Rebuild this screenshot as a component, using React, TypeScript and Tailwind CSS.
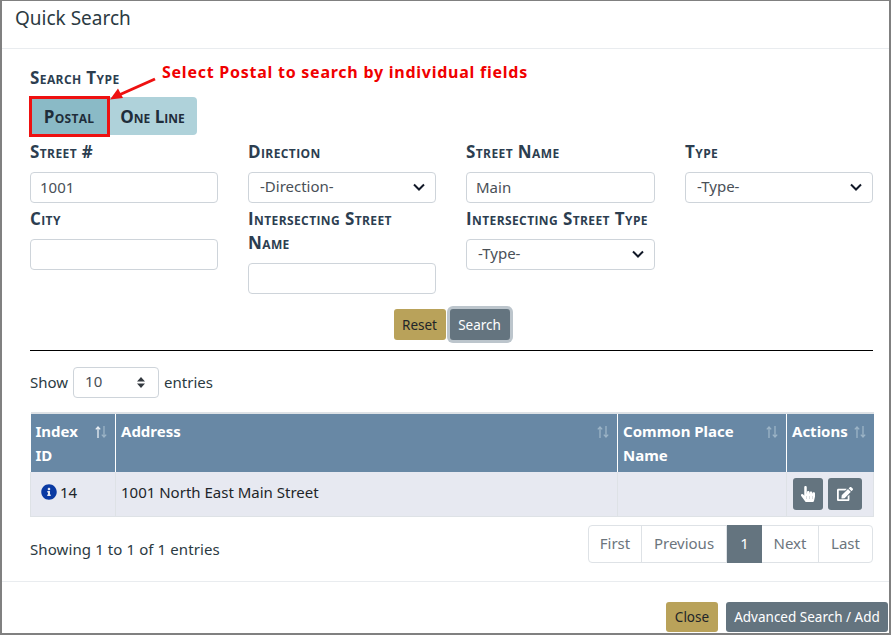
import type { ReactNode } from "react";
import { FaEdit, FaHandPointer, FaInfoCircle } from "react-icons/fa";

const labelClass =
  "block text-[17px] leading-[24px] font-bold text-[#2c3e50] [font-variant:small-caps] font-['Open_Sans','Noto_Sans',sans-serif] tracking-[0.4px]";
const inputClass =
  "block w-full h-[31px] rounded-[4px] border border-[#ced4da] bg-white pb-[2px] text-[15px] text-[#495057] outline-none";

function Field({ label, value }: { label: ReactNode; value?: string }) {
  return (
    <div>
      <label className={labelClass}>{label}</label>
      <input className={`${inputClass} mt-[8px] px-[9px]`} defaultValue={value} />
    </div>
  );
}

function SelectField({ label, value }: { label: string; value: string }) {
  return (
    <div>
      <label className={labelClass}>{label}</label>
      <div className="relative mt-[8px]">
        <select className={`${inputClass} appearance-none px-[11px]`} defaultValue={value}>
          <option>{value}</option>
        </select>
        <svg
          className="absolute right-[11px] top-[11px]"
          width="12"
          height="9"
          viewBox="0 0 12 9"
          fill="none"
          stroke="#111827"
          strokeWidth="2"
        >
          <path d="M1 1.5l5 5 5-5" />
        </svg>
      </div>
    </div>
  );
}

function SortIcon({ active }: { active?: boolean }) {
  return (
    <svg
      className="absolute right-[8px] top-[12px]"
      width="12"
      height="12"
      viewBox="0 0 12 12"
      fill="none"
      strokeWidth="1.3"
    >
      <path d="M3 12V1M.8 3.4L3 1l2.2 2.4" stroke={active ? "#e8eef3" : "#9cb4c6"} />
      <path d="M9 0v11M6.8 8.6L9 11l2.2-2.4" stroke="#9cb4c6" />
    </svg>
  );
}

function SortHeader({ label, active }: { label: string; active?: boolean }) {
  return (
    <th className="relative h-[59px] align-top border-r border-white last:border-r-0 pl-[5px] pr-[6px] pt-[5px] text-left text-[15px] leading-[24px] font-bold text-white">
      <div className="pr-[20px]">{label}</div>
      <SortIcon active={active} />
    </th>
  );
}

const pages = [
  { label: "First", className: "w-[53px] border-r border-[#dee2e6]" },
  { label: "Previous", className: "w-[85px] border-r border-[#dee2e6]" },
  { label: "1", className: "-my-px w-[35px] bg-[#64747f] text-white" },
  { label: "Next", className: "w-[57px] border-r border-[#dee2e6]" },
  { label: "Last", className: "w-[53px]" },
];

export default function App() {
  return (
    <div className="relative flex h-[635px] w-[891px] flex-col overflow-hidden border-2 border-t-[1px] border-[#808080] bg-white font-['Noto_Sans',sans-serif] text-[15px] text-[#212529]">
      <div className="h-[48px] shrink-0 border-b border-[#e9ecef] px-[13px] pt-[3px] text-[19px] leading-[28px] text-[#2b3a42]">
        Quick Search
      </div>

      <div className="flex-1 pl-[28px] pr-[16px]">
        <label className={`${labelClass} mt-[17px]`}>Search Type</label>
        <div className="mt-[7px] flex h-[38px] w-[167px] overflow-hidden rounded-[4px] bg-[#afd2da]">
          <button className="w-[78px] bg-[#8abac6] pt-[1px] text-[17px] font-bold tracking-[0.3px] text-[#1f2d3a] [font-variant:small-caps] font-['Open_Sans',sans-serif]">
            Postal
          </button>
          <button className="flex-1 pt-[1px] text-[17px] font-bold text-[#1f2d3a] [font-variant:small-caps] font-['Open_Sans',sans-serif]">
            One Line
          </button>
        </div>

        <div className="mt-[5px] grid grid-cols-[188px_188px_189px_188px] gap-x-[30px] gap-y-[4px]">
          <Field label="Street #" value="1001" />
          <SelectField label="Direction" value="-Direction-" />
          <Field label="Street Name" value="Main" />
          <SelectField label="Type" value="-Type-" />
          <Field label="City" />
          <Field
            label={
              <>
                Intersecting Street
                <br />
                Name
              </>
            }
          />
          <SelectField label="Intersecting Street Type" value="-Type-" />
        </div>

        <div className="mt-[15px] flex justify-center gap-[4px]">
          <button className="h-[31px] w-[52px] rounded-[3px] bg-[#b9a25a] pt-[1px] text-[13.5px] text-[#212529]">
            Reset
          </button>
          <button className="h-[31px] w-[60px] rounded-[3px] bg-[#64747f] pt-[1px] text-[13.5px] text-white ring-[3px] ring-[#bcc5cc]">
            Search
          </button>
        </div>

        <div className="mt-[10px] border-t border-black" />

        <div className="mt-[16px] flex h-[31px] items-center gap-[5px] text-[#2b3a42]">
          <span>Show</span>
          <div className="relative w-[86px]">
            <select className={`${inputClass} appearance-none px-[11px]`} defaultValue="10">
              <option>10</option>
            </select>
            <svg
              className="absolute right-[14px] top-[10px]"
              width="8"
              height="11"
              viewBox="0 0 8 11"
              fill="#343a40"
            >
              <path d="M4 0l4 4.5H0zM4 11L0 6.5h8z" />
            </svg>
          </div>
          <span>entries</span>
        </div>

        <table className="mt-[14px] w-[843px] table-fixed border-collapse">
          <colgroup>
            <col className="w-[85px]" />
            <col className="w-[502px]" />
            <col className="w-[169px]" />
            <col className="w-[87px]" />
          </colgroup>
          <thead>
            <tr className="border-t-2 border-[#dee2e6] bg-[#6888a5]">
              <SortHeader label="Index ID" active />
              <SortHeader label="Address" />
              <SortHeader label="Common Place Name" />
              <SortHeader label="Actions" />
            </tr>
          </thead>
          <tbody>
            <tr className="h-[44px] border-b border-[#dee2e6] bg-[#e7e9f1]">
              <td className="border-x border-[#dee2e6] pl-[10px] pb-[4px]">
                <span className="flex items-center gap-[3px]">
                  <FaInfoCircle className="h-[16px] w-[16px] text-[#0a3aa3]" />
                  14
                </span>
              </td>
              <td className="border-r border-[#dee2e6] pl-[5px] pb-[4px]">
                1001 North East Main Street
              </td>
              <td className="border-r border-[#dee2e6]" />
              <td className="border-r border-[#dee2e6] pl-[6px]">
                <div className="flex gap-[5px]">
                  <button className="flex h-[32px] w-[30px] items-center justify-center rounded-[3px] bg-[#64747f] text-white">
                    <FaHandPointer className="h-[16px] w-[16px]" />
                  </button>
                  <button className="flex h-[32px] w-[34px] items-center justify-center rounded-[3px] bg-[#64747f] text-white">
                    <FaEdit className="h-[16px] w-[16px]" />
                  </button>
                </div>
              </td>
            </tr>
          </tbody>
        </table>

        <div className="mt-[8px] flex items-center justify-between">
          <span className="pt-[12px] tracking-[0.1px] text-[#2b3a42]">
            Showing 1 to 1 of 1 entries
          </span>
          <div className="flex h-[38px] rounded-[4px] border border-[#dee2e6] text-[#6c757d]">
            {pages.map((page) => (
              <span
                key={page.label}
                className={`flex items-center justify-center ${page.className}`}
              >
                {page.label}
              </span>
            ))}
          </div>
        </div>
      </div>

      <div className="flex h-[52px] shrink-0 justify-end gap-[8px] border-t border-[#e9ecef] pt-[20px] pr-[1px] text-[13.5px]">
        <button className="h-[30px] w-[52px] rounded-[3px] bg-[#b9a25a] text-[#212529]">
          Close
        </button>
        <button className="h-[30px] w-[162px] rounded-[3px] bg-[#64747f] text-white">
          Advanced Search / Add
        </button>
      </div>

      {/* annotation drawn on top of the form */}
      <div className="absolute left-[27px] top-[95px] h-[41px] w-[81px] border-[3px] border-[#ee1111]" />
      <svg className="absolute left-[105px] top-[72px]" width="50" height="30" viewBox="0 0 50 30">
        <path d="M48 6L12 22" stroke="#ee1111" strokeWidth="3" />
        <path d="M3 26.5l13-1.5-5-9.5z" fill="#ee1111" />
      </svg>
      <span className="absolute left-[160px] top-[60px] text-[16px] leading-[22px] font-bold tracking-[0.75px] text-[#f00000] font-['Noto_Sans',sans-serif]">
        Select Postal to search by individual fields
      </span>
    </div>
  );
}
